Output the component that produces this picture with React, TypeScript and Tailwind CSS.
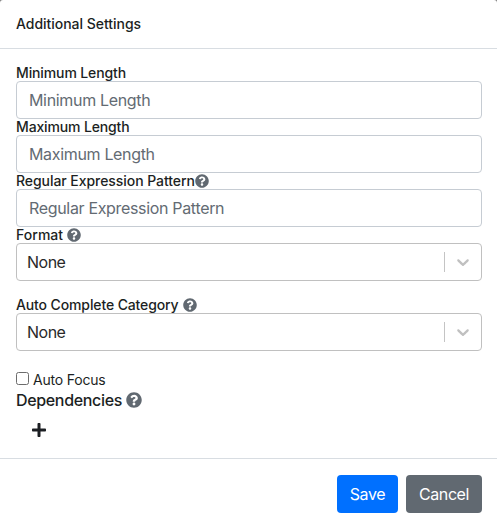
import type { ReactNode } from "react";
import { FaQuestionCircle, FaPlus } from "react-icons/fa";

function Label({ children }: { children: ReactNode }) {
  return (
    <div className="flex h-4 items-center text-[14px] leading-4 font-medium whitespace-nowrap">
      {children}
    </div>
  );
}

function TextField({ placeholder }: { placeholder: string }) {
  return (
    <input
      type="text"
      placeholder={placeholder}
      className="block h-[38px] w-full rounded-[4px] border border-[#c6ccd3] bg-white px-3 text-[16px] leading-6 tracking-[-0.33px] placeholder:text-[#636b73]"
    />
  );
}

function SelectField() {
  return (
    <div className="flex h-[38px] items-center rounded-[4px] border border-[#c0c0c0] bg-white pl-[10px]">
      <span className="flex-1 text-[16px] leading-6 tracking-[-0.5px] text-[#292929]">None</span>
      <span className="h-5 w-px bg-[#c4c4c4]" />
      <span className="flex w-9 justify-center text-[#c0c0c0]">
        <svg width="20" height="20" viewBox="0 0 20 20" fill="currentColor">
          <path d="M4.516 7.548c0.436-0.446 1.043-0.481 1.576 0l3.908 3.747 3.908-3.747c0.533-0.481 1.141-0.446 1.574 0 0.436 0.445 0.408 1.197 0 1.615-0.406 0.418-4.695 4.502-4.695 4.502-0.217 0.223-0.502 0.335-0.787 0.335s-0.57-0.112-0.789-0.335c0 0-4.287-4.084-4.695-4.502s-0.436-1.17 0-1.615z" />
        </svg>
      </span>
    </div>
  );
}

export default function App() {
  return (
    <div className="h-[526px] w-[497px] bg-[#7f7f7f] font-[Inter,sans-serif] text-[#1c1f23]">
      <div className="flex h-full flex-col rounded-t-[3px] bg-white">
        <header className="flex h-[49px] items-center border-b border-[#d8dde2] px-4">
          <h1 className="text-[14px] leading-5 font-medium tracking-[-0.03px]">Additional Settings</h1>
        </header>

        <main className="flex h-[409px] flex-col pt-4 pr-[15px] pl-4">
          <Label>
            <span className="tracking-[-0.12px]">Minimum Length</span>
          </Label>
          <TextField placeholder="Minimum Length" />
          <Label>
            <span className="tracking-[-0.15px]">Maximum Length</span>
          </Label>
          <TextField placeholder="Maximum Length" />
          <Label>
            <span className="tracking-[-0.06px]">Regular Expression Pattern</span>
            <FaQuestionCircle size={14} className="text-[#616971]" />
          </Label>
          <TextField placeholder="Regular Expression Pattern" />
          <Label>
            <span className="tracking-[0.03px]">Format</span>
            <FaQuestionCircle size={14} className="ml-1 text-[#616971]" />
          </Label>
          <SelectField />
          <div className="h-4" />
          <Label>
            <span className="tracking-[-0.12px]">Auto Complete Category</span>
            <FaQuestionCircle size={14} className="ml-1 text-[#616971]" />
          </Label>
          <SelectField />

          <label className="mt-[19px] flex h-5 items-center text-[14px] leading-5">
            <input
              type="checkbox"
              className="mb-[3px] h-[13px] w-[13px] appearance-none rounded-[2.5px] border border-[#6c6c6c] bg-white"
            />
            <span className="ml-1 tracking-[-0.2px]">Auto Focus</span>
          </label>
          <div className="flex h-5 items-center text-[16px] leading-5 font-medium">
            <span className="tracking-[-0.34px]">Dependencies</span>
            <FaQuestionCircle size={16} className="ml-1 text-[#616971]" />
          </div>
          <button type="button" className="mt-3 ml-[15px] flex h-4 w-4 items-center justify-center">
            <FaPlus size={16} />
          </button>
        </main>

        <footer className="flex h-[68px] justify-end gap-2 border-t border-[#d8dde2] px-[15px] pt-4 text-[16px] text-white">
          <button type="button" className="h-[38px] w-[61px] rounded-[4px] bg-[#0070ff] tracking-[-0.35px]">
            Save
          </button>
          <button type="button" className="h-[38px] w-[76px] rounded-[4px] bg-[#616971] tracking-[-0.4px]">
            Cancel
          </button>
        </footer>
      </div>
    </div>
  );
}
